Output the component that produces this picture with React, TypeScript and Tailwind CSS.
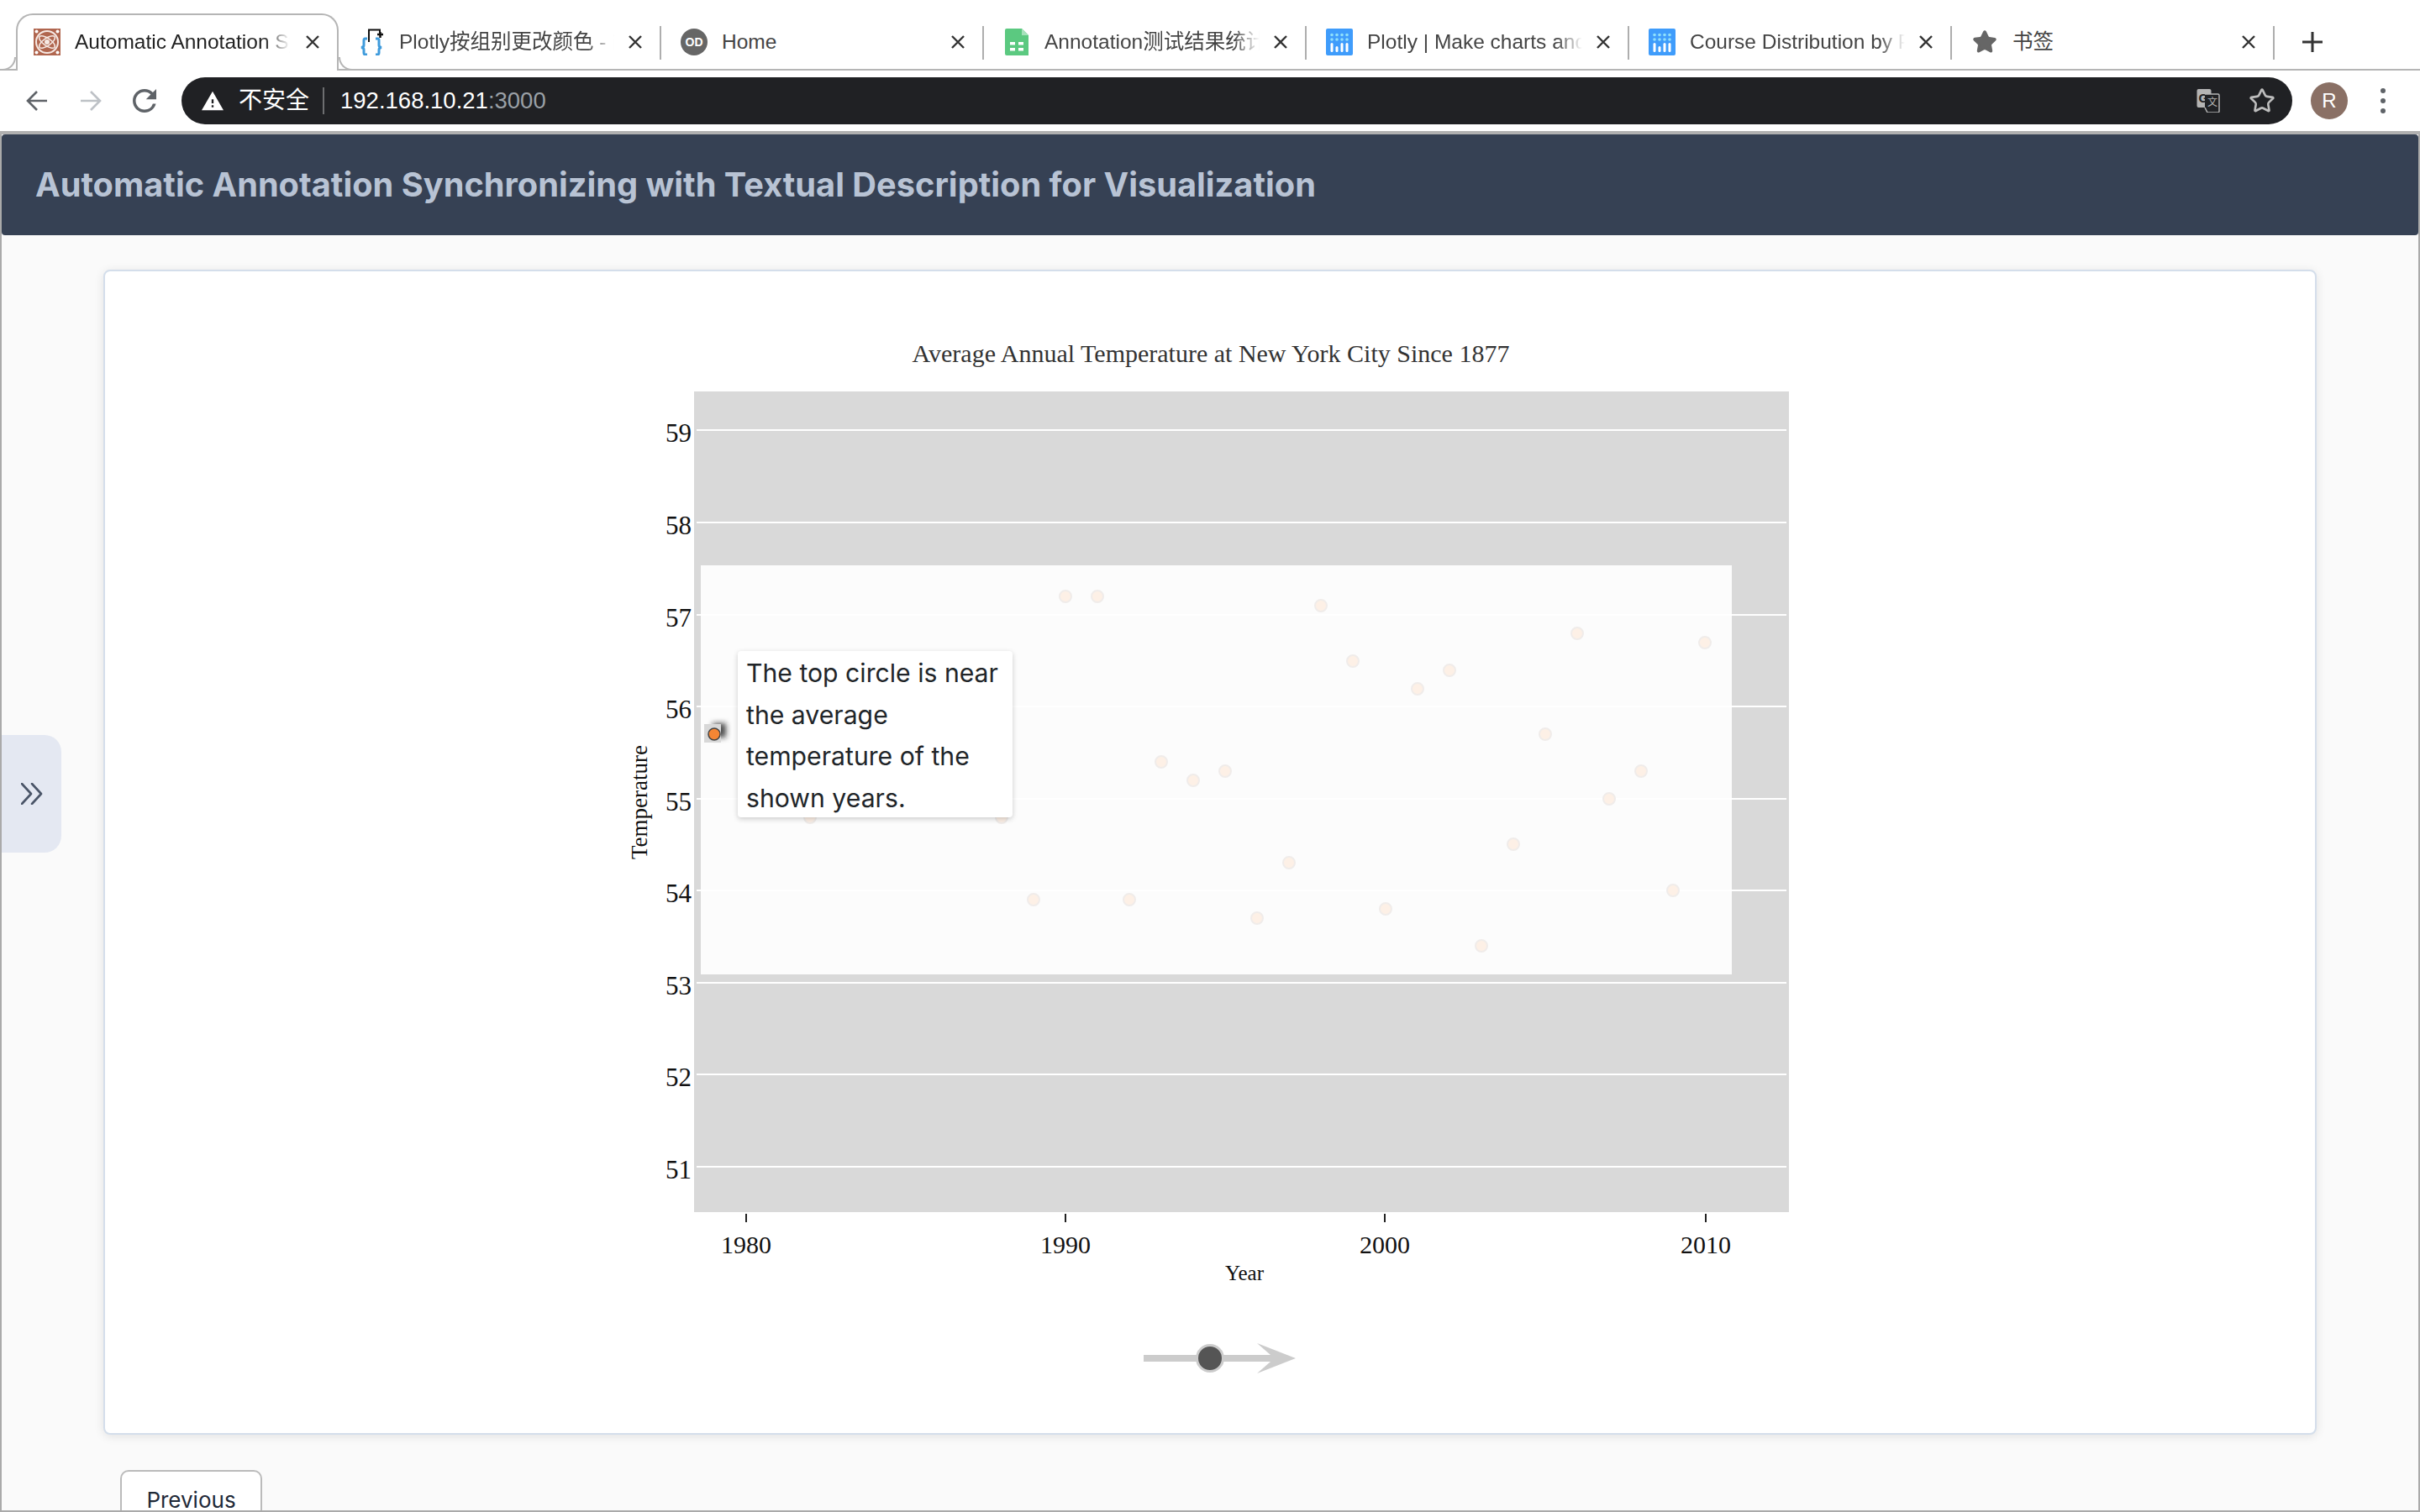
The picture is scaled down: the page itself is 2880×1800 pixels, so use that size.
import { Star } from 'lucide-react';
import type { ReactNode } from 'react';

const sans = "font-['Liberation_Sans','Noto_Sans_CJK_SC',sans-serif]";

function ReactIcon() {
  return (
    <svg width="32" height="32" viewBox="0 0 32 32">
      <rect width="32" height="32" fill="#b0664f" />
      <circle cx="16" cy="16" r="13" fill="none" stroke="#f6e9e4" strokeWidth="2" />
      <ellipse cx="16" cy="16" rx="11" ry="4.5" fill="none" stroke="#f6e9e4" strokeWidth="1.5" transform="rotate(35 16 16)" />
      <ellipse cx="16" cy="16" rx="11" ry="4.5" fill="none" stroke="#f6e9e4" strokeWidth="1.5" transform="rotate(-35 16 16)" />
      <circle cx="16" cy="16" r="3" fill="#f6e9e4" />
      <circle cx="3.5" cy="3.5" r="2" fill="#fff" />
      <circle cx="28.5" cy="3.5" r="2" fill="#fff" />
      <circle cx="3.5" cy="28.5" r="2" fill="#fff" />
      <circle cx="28.5" cy="28.5" r="2" fill="#fff" />
    </svg>
  );
}

function BraceIcon() {
  return (
    <svg width="32" height="32" viewBox="0 0 32 32">
      <path d="M11 13H8.5Q7 13 7 15V21Q7 23 4 23.5Q7 24 7 26V30Q7 32 9 32H11" fill="none" stroke="#3f9bdc" strokeWidth="3" transform="translate(0 -1)" />
      <path d="M21 13H23.5Q25 13 25 15V21Q25 23 28 23.5Q25 24 25 26V30Q25 32 23 32H21" fill="none" stroke="#3f9bdc" strokeWidth="3" transform="translate(0 -1)" />
      <path d="M13 16V1.5H26V8" fill="none" stroke="#111" strokeWidth="2" />
      <path d="M23 7H30M26.5 4V11" fill="none" stroke="#111" strokeWidth="2.5" />
    </svg>
  );
}

function OdIcon() {
  return (
    <div className="flex h-8 w-8 items-center justify-center rounded-full bg-[#666666] font-['Liberation_Sans',sans-serif] text-[14px] font-bold text-white">
      OD
    </div>
  );
}

function SheetIcon() {
  return (
    <svg width="28" height="32" viewBox="0 0 28 32">
      <path d="M2 0H20L28 8V32H2A2 2 0 0 1 0 30V2A2 2 0 0 1 2 0Z" fill="#5bc980" />
      <path d="M20 0L28 8H20Z" fill="#a5e2bb" />
      <rect x="6" y="16" width="6" height="3.5" fill="#fff" />
      <rect x="16" y="16" width="6" height="3.5" fill="#fff" />
      <rect x="6" y="23" width="6" height="3.5" fill="#fff" />
      <rect x="16" y="23" width="6" height="3.5" fill="#fff" />
    </svg>
  );
}

function PlotlyIcon() {
  const xs = [7, 13, 19, 25];
  return (
    <svg width="32" height="32" viewBox="0 0 32 32">
      <rect width="32" height="32" rx="2" fill="#3f9cfb" />
      {xs.map(x => (
        <circle key={x} cx={x} cy="7.5" r="1.8" fill="#8fe0fb" />
      ))}
      {xs.map(x => (
        <circle key={x} cx={x} cy="13" r="1.8" fill="#8fe0fb" />
      ))}
      <rect x="5.5" y="17" width="3" height="11" rx="1.5" fill="#fff" />
      <rect x="11.5" y="21" width="3" height="7" rx="1.5" fill="#fff" />
      <rect x="17.5" y="17" width="3" height="11" rx="1.5" fill="#fff" />
      <rect x="23.5" y="17" width="3" height="11" rx="1.5" fill="#fff" />
    </svg>
  );
}

function CloseIcon() {
  return (
    <svg width="16" height="16" viewBox="0 0 16 16" className="shrink-0">
      <path d="M1 1L15 15M15 1L1 15" stroke="#333333" strokeWidth="2.4" />
    </svg>
  );
}

type TabProps = {
  icon: ReactNode;
  title: string;
  active?: boolean;
  fade?: boolean;
};

function Tab({ icon, title, active, fade }: TabProps) {
  if (active) {
    return (
      <div className="relative z-10 -mb-[2px] flex h-[68px] w-[384px] shrink-0 items-center rounded-t-[20px] border-2 border-b-0 border-[#b5b5b5] bg-white pb-[2px] pl-[19px]">
        <div className="absolute -bottom-[0px] -left-[18px] h-[16px] w-[16px] rounded-br-[16px] border-r-2 border-b-2 border-[#b5b5b5]" />
        <div className="absolute -bottom-[0px] -right-[18px] h-[16px] w-[16px] rounded-bl-[16px] border-l-2 border-b-2 border-[#b5b5b5]" />
        <div className="flex w-8 shrink-0 justify-center">{icon}</div>
        <div className="ml-[17px] w-[256px] overflow-hidden whitespace-nowrap text-[24.5px] text-[#222222] [mask-image:linear-gradient(to_right,black_88%,transparent)]">
          {title}
        </div>
        <div className="ml-[19px]">
          <CloseIcon />
        </div>
      </div>
    );
  }
  return (
    <div className="relative flex h-[66px] w-[384px] shrink-0 items-center pt-[2px] pl-[23px]">
      <div className="flex w-8 shrink-0 justify-center">{icon}</div>
      <div className={`ml-[17px] w-[256px] overflow-hidden whitespace-nowrap text-[24.5px] text-[#444444] ${fade ? '[mask-image:linear-gradient(to_right,black_88%,transparent)]' : ''}`}>
        {title}
      </div>
      <div className="ml-[17px]">
        <CloseIcon />
      </div>
      <div className="absolute right-0 top-[15px] h-[40px] w-[2px] bg-[#aeaeae]" />
    </div>
  );
}

function BrowserChrome() {
  return (
    <div className={`shrink-0 bg-white ${sans}`}>
      <div className="flex h-[84px] items-end border-b-2 border-[#b5b5b5] pl-[19px]">
        <Tab active icon={<ReactIcon />} title="Automatic Annotation Synchronizing" />
        <Tab fade icon={<BraceIcon />} title="Plotly按组别更改颜色 - 简书文章" />
        <Tab icon={<OdIcon />} title="Home" />
        <Tab fade icon={<SheetIcon />} title="Annotation测试结果统计表格" />
        <Tab fade icon={<PlotlyIcon />} title="Plotly | Make charts and dashboards" />
        <Tab fade icon={<PlotlyIcon />} title="Course Distribution by Program" />
        <Tab icon={<Star size={30} fill="#666666" stroke="#666666" />} title="书签" />
        <div className="flex h-[66px] items-center pt-[2px] pl-[32px]">
          <svg width="26" height="26" viewBox="0 0 26 26">
            <path d="M13 1V25M1 13H25" stroke="#333333" strokeWidth="3" />
          </svg>
        </div>
      </div>
      <div className="flex h-[76px] items-center border-b-4 border-[#b0b0b0] pl-[31px]">
        <svg width="26" height="26" viewBox="0 0 26 26">
          <path d="M25 13H3M13 2L2 13L13 24" fill="none" stroke="#5f6368" strokeWidth="2.6" />
        </svg>
        <svg width="26" height="26" viewBox="0 0 26 26" className="ml-[38px]">
          <path d="M1 13H23M13 2L24 13L13 24" fill="none" stroke="#bdc1c6" strokeWidth="2.6" />
        </svg>
        <svg width="28" height="28" viewBox="4 4 16 16" className="ml-[37px]">
          <path d="M17.65 6.35A7.958 7.958 0 0 0 12 4c-4.42 0-7.99 3.58-7.99 8s3.57 8 7.99 8c3.73 0 6.84-2.55 7.73-6h-2.08A5.99 5.99 0 0 1 12 18c-3.31 0-6-2.69-6-6s2.69-6 6-6c1.66 0 3.14.69 4.22 1.78L13 11h7V4l-2.35 2.35z" fill="#5f6368" />
        </svg>
        <div className="ml-[30px] flex h-[56px] w-[2512px] items-center rounded-full bg-[#202124] pl-[24px] pr-[20px]">
          <svg width="26" height="26" viewBox="1 2 22 19" className="shrink-0">
            <path d="M1 21h22L12 2 1 21zm12-3h-2v-2h2v2zm0-4h-2v-4h2v4z" fill="#ffffff" />
          </svg>
          <span className="ml-[18px] text-[28px] text-white">不安全</span>
          <div className="ml-[16px] h-[32px] w-[2px] bg-[#6d6e70]" />
          <span className="ml-[19px] text-[27.5px] text-white">
            192.168.10.21<span className="text-[#9aa0a6]">:3000</span>
          </span>
          <svg width="28" height="28" viewBox="0 0 28 28" className="ml-auto shrink-0">
            <rect x="0.5" y="0" width="17" height="22" rx="2" fill="#b4b4b4" />
            <text x="2.5" y="16" fontSize="15" fontWeight="700" fill="#202124" className="font-['Liberation_Sans',sans-serif]">G</text>
            <path d="M10 6H25.5A1.5 1.5 0 0 1 27 7.5V26.5A1.5 1.5 0 0 1 25.5 28H13L10 22" fill="#202124" stroke="#b4b4b4" strokeWidth="1.5" />
            <text x="13" y="20" fontSize="12" fill="#b4b4b4" className="font-['Noto_Sans_CJK_SC',sans-serif]">文</text>
          </svg>
          <Star size={32} stroke="#bdbdbd" strokeWidth={2} className="ml-[34px] shrink-0" />
        </div>
        <div className="ml-[22px] flex h-[44px] w-[44px] items-center justify-center rounded-full bg-[#8a7065] text-[24px] text-white">R</div>
        <div className="ml-[39px] flex flex-col gap-[6px]">
          <div className="h-[6px] w-[6px] rounded-full bg-[#5f6368]" />
          <div className="h-[6px] w-[6px] rounded-full bg-[#5f6368]" />
          <div className="h-[6px] w-[6px] rounded-full bg-[#5f6368]" />
        </div>
      </div>
    </div>
  );
}

const grid = [
  { label: '59', y: 512 },
  { label: '58', y: 622 },
  { label: '57', y: 732 },
  { label: '56', y: 841 },
  { label: '55', y: 951 },
  { label: '54', y: 1060 },
  { label: '53', y: 1170 },
  { label: '52', y: 1279 },
  { label: '51', y: 1389 },
];

const xTicks = [
  { label: '1980', x: 888 },
  { label: '1990', x: 1268 },
  { label: '2000', x: 1648 },
  { label: '2010', x: 2030 },
];

const dots = [
  [1268, 710], [1306, 710], [1572, 721], [1877, 754], [2029, 765], [1610, 787],
  [1725, 798], [1687, 820], [1839, 874], [1382, 907], [1420, 929], [1458, 918],
  [1953, 918], [1915, 951], [1801, 1005], [1534, 1027], [1230, 1071], [1344, 1071],
  [1496, 1093], [1649, 1082], [1991, 1060], [1763, 1126], [964, 973], [1192, 973],
];

function Chart() {
  return (
    <div className="relative h-[1145px] w-[1440px]">
      <svg width="1440" height="1145" viewBox="720 395 1440 1145" className="font-['Liberation_Serif',serif]">
        <defs>
          <filter id="soft" x="-50%" y="-50%" width="200%" height="200%">
            <feGaussianBlur stdDeviation="3" />
          </filter>
        </defs>
        <text x="1441" y="431" textAnchor="middle" fontSize="30" fill="#333333">
          Average Annual Temperature at New York City Since 1877
        </text>
        <rect x="826" y="466" width="1303" height="977" fill="#d9d9d9" />
        {grid.map(g => (
          <line key={g.label} x1="829" x2="2126" y1={g.y} y2={g.y} stroke="#ffffff" strokeWidth="2" />
        ))}
        {grid.map(g => (
          <text key={g.label} x="823" y={g.y + 14} textAnchor="end" fontSize="31" fill="#111111">
            {g.label}
          </text>
        ))}
        {xTicks.map(t => (
          <g key={t.label}>
            <line x1={t.x} x2={t.x} y1="1445" y2="1455" stroke="#222222" strokeWidth="2" />
            <text x={t.x} y="1492" textAnchor="middle" fontSize="30" fill="#111111">{t.label}</text>
          </g>
        ))}
        <text x="1481" y="1524" textAnchor="middle" fontSize="25" fill="#111111">Year</text>
        <text x="770" y="955" textAnchor="middle" fontSize="27" fill="#111111" transform="rotate(-90 770 955)">Temperature</text>
        <rect x="834" y="673" width="1227" height="487" fill="#ffffff" fillOpacity="0.9" />
        {dots.map(([x, y]) => (
          <circle key={`${x}-${y}`} cx={x} cy={y} r="7" fill="#fdf0e6" stroke="#f0ecea" strokeWidth="2" />
        ))}
        <rect x="848" y="861" width="16" height="17" fill="#222222" fillOpacity="0.8" filter="url(#soft)" />
        <rect x="838" y="862" width="20" height="22" fill="#d8d8d8" />
        <circle cx="850" cy="874" r="7" fill="#f58634" stroke="#444444" strokeWidth="1.5" />
      </svg>
      <div className="absolute left-[158px] top-[380px] h-[198px] w-[327px] rounded-[4px] bg-white pl-[10px] pt-[2px] font-['Inter',sans-serif] text-[30.2px] leading-[49.5px] text-[#212529] shadow-[0_2px_6px_rgba(0,0,0,0.2)]">
        The top circle is near the average temperature of the shown years.
      </div>
    </div>
  );
}

function SliderArrow() {
  return (
    <svg width="204" height="54" viewBox="1338 1590 204 54" className="mt-[50px]">
      <path d="M1361 1613H1512L1496 1599L1542 1617L1496 1635L1512 1621H1361Z" fill="#cccccc" />
      <circle cx="1440" cy="1617" r="15.5" fill="#555555" stroke="#cccccc" strokeWidth="3" />
    </svg>
  );
}

export default function App() {
  return (
    <div className="flex h-[1800px] w-[2880px] flex-col overflow-hidden bg-white">
      <BrowserChrome />
      <div className="relative flex flex-1 flex-col overflow-hidden border-x-2 border-b-2 border-[#aaaaaa] bg-[#fafafa] font-['Inter',sans-serif]">
        <header className="flex h-[120px] shrink-0 items-center rounded-[4px] bg-[#364154] pl-[40px]">
          <h1 className="text-[39.75px] font-bold text-[#b8c3d4]">
            Automatic Annotation Synchronizing with Textual Description for Visualization
          </h1>
        </header>
        <main className="flex-1 pl-[121px]">
          <section className="mt-[41px] flex h-[1387px] w-[2634px] flex-col items-center rounded-[8px] border-2 border-[#d4deeb] bg-white pt-[72px] shadow-[0_2px_12px_rgba(0,0,0,0.1)]">
            <Chart />
            <SliderArrow />
          </section>
          <button className="ml-[20px] mt-[42px] h-[70px] w-[169px] rounded-[10px] border-2 border-[#bbbbbb] bg-white text-[26px] text-[#1f2937]">
            Previous
          </button>
        </main>
        <div className="absolute left-0 top-[715px] flex h-[140px] w-[71px] items-center justify-center rounded-r-[20px] bg-[#e4e8f2]">
          <svg width="26" height="26" viewBox="0 0 26 26">
            <path d="M1 1L12 13L1 25M13 1L24 13L13 25" fill="none" stroke="#4a5568" strokeWidth="2.6" strokeLinecap="round" strokeLinejoin="round" />
          </svg>
        </div>
      </div>
    </div>
  );
}
